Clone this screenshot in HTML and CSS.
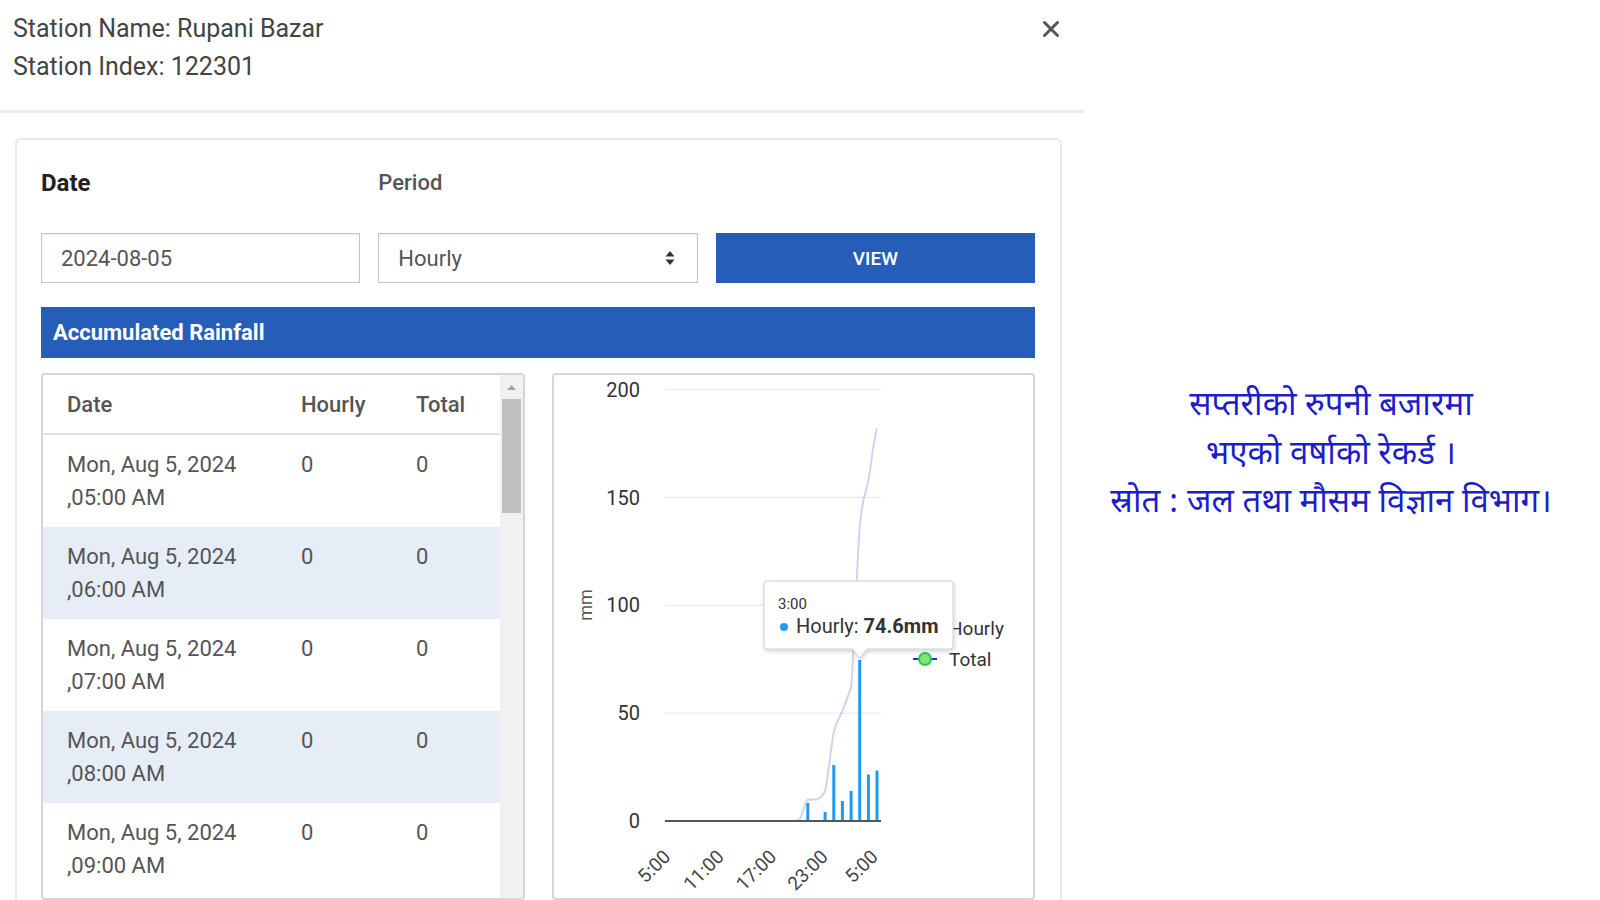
FILE: index.html
```html
<!DOCTYPE html>
<html lang="en">
<head>
<meta charset="utf-8">
<title>Rupani Bazar – Accumulated Rainfall</title>
<link rel="stylesheet" href="styles.css">
</head>
<body>
<div class="page">
  <section class="modal">
    <header class="modal-header">
      <div class="station">
        <div class="station-line">Station Name: Rupani Bazar</div>
        <div class="station-line">Station Index: 122301</div>
      </div>
      <button class="close" aria-label="Close">
        <svg viewBox="0 0 18 18" width="18" height="18"><path d="M2.5 2.5 L15.5 15.5 M15.5 2.5 L2.5 15.5" stroke="#555" stroke-width="3" stroke-linecap="round"/></svg>
      </button>
    </header>
    <div class="modal-body">
      <div class="card">
        <div class="form-grid">
          <div class="lbl lbl-date">Date</div>
          <div class="lbl lbl-period">Period</div>
          <div></div>
          <div class="input">2024-08-05</div>
          <div class="input select">
            <span>Hourly</span>
            <svg class="sel-arrows" viewBox="0 0 10 16" width="10" height="16"><path d="M5 1 L9.5 6.5 H0.5 Z M5 15 L9.5 9.5 H0.5 Z" fill="#333"/></svg>
          </div>
          <button class="btn">VIEW</button>
        </div>
        <div class="section-bar">Accumulated Rainfall</div>
        <div class="panels">
          <div class="panel table-panel">
            <div class="table">
              <div class="tr th">
                <div class="c1">Date</div><div>Hourly</div><div>Total</div>
              </div>
              <div class="tr td">
                <div class="c1">Mon, Aug 5, 2024<br>,05:00 AM</div><div>0</div><div>0</div>
              </div>
              <div class="tr td alt">
                <div class="c1">Mon, Aug 5, 2024<br>,06:00 AM</div><div>0</div><div>0</div>
              </div>
              <div class="tr td">
                <div class="c1">Mon, Aug 5, 2024<br>,07:00 AM</div><div>0</div><div>0</div>
              </div>
              <div class="tr td alt">
                <div class="c1">Mon, Aug 5, 2024<br>,08:00 AM</div><div>0</div><div>0</div>
              </div>
              <div class="tr td">
                <div class="c1">Mon, Aug 5, 2024<br>,09:00 AM</div><div>0</div><div>0</div>
              </div>
            </div>
            <div class="scrollbar">
              <div class="sb-arrow"><svg viewBox="0 0 9 5" width="9" height="5"><path d="M4.5 0 L9 5 H0 Z" fill="#a3a3a3"/></svg></div>
              <div class="sb-thumb"></div>
            </div>
          </div>
          <div class="panel chart-panel">
            <svg class="chart" viewBox="553 375 479 523" width="479" height="523">
              <defs>
                <filter id="tipShadow" x="-10%" y="-10%" width="130%" height="140%">
                  <feDropShadow dx="1" dy="2" stdDeviation="2" flood-color="#000" flood-opacity="0.18"/>
                </filter>
              </defs>
              <!-- grid -->
              <g stroke="#e6e6e6" stroke-width="1">
                <line x1="664" y1="389.6" x2="880" y2="389.6"/>
                <line x1="664" y1="497.5" x2="880" y2="497.5"/>
                <line x1="664" y1="605.3" x2="880" y2="605.3"/>
                <line x1="664" y1="713.2" x2="880" y2="713.2"/>
              </g>
              <!-- y labels -->
              <g class="ylab" text-anchor="end">
                <text x="639" y="396.6">200</text>
                <text x="639" y="504.5">150</text>
                <text x="639" y="612.3">100</text>
                <text x="639" y="720.2">50</text>
                <text x="639" y="828">0</text>
              </g>
              <text class="ytitle" x="585" y="605" text-anchor="middle" transform="rotate(-90 585 605)" dy="6">mm</text>
              <!-- x labels -->
              <g class="xlab" text-anchor="end">
                <text x="670.5" y="858" transform="rotate(-45 670.5 858)">5:00</text>
                <text x="724" y="858" transform="rotate(-45 724 858)">11:00</text>
                <text x="776.5" y="858" transform="rotate(-45 776.5 858)">17:00</text>
                <text x="828" y="858" transform="rotate(-45 828 858)">23:00</text>
                <text x="878" y="858" transform="rotate(-45 878 858)">5:00</text>
              </g>
              <!-- total (inactive) -->
              <path transform="matrix(1 0 0 0.994 0 0)" d="M664,826 L789.5,826 C792.4,825.8 795.3,826 798.2,824.9 C801.1,821.3 803.9,807.7 806.8,804.3 C809.7,804.3 812.6,804.3 815.5,804.3 C818.4,802.9 821.2,803 824.1,795.6 C827,784.4 829.9,750.4 832.8,737 C835.7,723.6 838.5,722.9 841.4,715.3 C844.3,707.7 847.2,700 850.1,691.5 C853,660.8 855.8,565.6 858.7,530.9 C861.6,496.2 864.5,499.7 867.4,483.1 C870.3,466.5 873.1,439.8 876,431.1" fill="none" stroke="#1f1fb0" stroke-opacity="0.2" stroke-width="2"/>
              <!-- bars -->
              <g fill="#1e9bf0">
                <rect x="796.7" y="820" width="3" height="1"/>
                <rect x="805.3" y="803" width="3" height="18"/>
                <rect x="822.6" y="812" width="3" height="9"/>
                <rect x="831.3" y="765" width="3" height="56"/>
                <rect x="839.9" y="801" width="3" height="20"/>
                <rect x="848.6" y="791" width="3" height="30"/>
                <rect x="857.2" y="660" width="3" height="161"/>
                <rect x="865.9" y="774.5" width="3" height="46.5"/>
                <rect x="874.5" y="770.5" width="3" height="50.5"/>
              </g>
              <line x1="664" y1="821" x2="880" y2="821" stroke="#555" stroke-width="2"/>
              <!-- legend -->
              <rect x="918" y="622" width="12" height="12" rx="2" fill="#1e9bf0"/>
              <text class="leg" x="948" y="635">Hourly</text>
              <line x1="912" y1="659" x2="936" y2="659" stroke="#2b2bd4" stroke-width="2"/>
              <circle cx="924" cy="659" r="6" fill="#86e07f" stroke="#2ecc40" stroke-width="2"/>
              <text class="leg" x="948" y="666">Total</text>
              <!-- tooltip -->
              <path d="M766,581 H949 Q952,581 952,584 V646 Q952,649 949,649 H866 L858.7,658 L851.4,649 H766 Q763,649 763,646 V584 Q763,581 766,581 Z" fill="#fff" stroke="#d0d0d0" stroke-width="1" filter="url(#tipShadow)"/>
              <text class="tip-head" x="777" y="609">3:00</text>
              <circle cx="783" cy="627" r="4" fill="#1e9bf0"/>
              <text class="tip-body" x="795" y="633">Hourly: <tspan font-weight="700">74.6mm</tspan></text>
            </svg>
          </div>
        </div>
      </div>
    </div>
  </section>
  <aside class="note">
    <p>सप्तरीको रुपनी बजारमा</p>
    <p>भएको वर्षाको रेकर्ड ।</p>
    <p>स्रोत : जल तथा मौसम विज्ञान विभाग।</p>
  </aside>
</div>
</body>
</html>
```

FILE: styles.css
```css
html, body {
  margin: 0;
  padding: 0;
}
body {
  width: 1600px;
  height: 900px;
  overflow: hidden;
  background: #fff;
  font-family: Roboto, "Liberation Sans", Arial, sans-serif;
  color: #444;
}
.page {
  display: flex;
  height: 900px;
}
.modal {
  width: 1084px;
  flex: none;
}
.modal-header {
  display: flex;
  justify-content: space-between;
  align-items: flex-start;
  padding: 10px 24px 24px 13px;
  border-bottom: 3px solid #ececec;
}
.station-line {
  font-size: 25px;
  line-height: 38px;
  color: #444;
}
.close {
  border: 0;
  background: none;
  padding: 0;
  margin-top: 10px;
  width: 18px;
  height: 18px;
  display: block;
}
.close svg { display: block; }
.modal-body {
  padding: 25px 22px 0 15px;
}
.card {
  border: 2px solid #e9e9e9;
  border-bottom: 0;
  border-radius: 6px 6px 0 0;
  padding: 28px 25px 0 24px;
}
.form-grid {
  display: grid;
  grid-template-columns: repeat(3, 1fr);
  column-gap: 18px;
  row-gap: 35px;
}
.lbl {
  height: 30px;
  line-height: 30px;
}
.lbl-date {
  font-size: 24px;
  font-weight: 700;
  color: #222;
}
.lbl-period {
  font-size: 22px;
  font-weight: 500;
  color: #555;
}
.input {
  height: 50px;
  box-sizing: border-box;
  border: 1px solid #c4c4c4;
  box-shadow: inset 0 1px 2px rgba(0,0,0,0.08);
  padding: 0 19px;
  display: flex;
  align-items: center;
  font-size: 22px;
  color: #555;
}
.select {
  justify-content: space-between;
  padding-right: 22px;
}
.sel-arrows { display: block; }
.btn {
  height: 50px;
  border: 0;
  background: #255db8;
  color: #fff;
  font-family: Roboto, "Liberation Sans", Arial, sans-serif;
  font-size: 19px;
  font-weight: 500;
  padding: 0;
}
.section-bar {
  margin-top: 24px;
  height: 51px;
  line-height: 51px;
  background: #255db8;
  color: #fff;
  font-size: 22px;
  font-weight: 700;
  padding-left: 12px;
}
.panels {
  margin-top: 15px;
  display: grid;
  grid-template-columns: 1fr 1fr;
  column-gap: 27px;
}
.panel {
  height: 527px;
  box-sizing: border-box;
  border: 2px solid #d6d6d6;
  border-radius: 4px;
  overflow: hidden;
}
.table-panel {
  display: flex;
}
.table {
  flex: 1;
  font-size: 22px;
  color: #555;
}
.tr {
  display: grid;
  grid-template-columns: 258px 115px 1fr;
}
.c1 { padding-left: 24px; }
.th {
  height: 60px;
  box-sizing: border-box;
  align-items: center;
  border-bottom: 2px solid #e3e3e3;
  font-weight: 500;
  color: #555;
}
.td {
  height: 92px;
  box-sizing: border-box;
  padding-top: 13px;
  line-height: 33px;
}
.td.alt {
  background: #e7edf7;
}
.scrollbar {
  width: 23px;
  flex: none;
  background: #f1f1f1;
}
.sb-arrow {
  height: 24px;
  display: flex;
  align-items: center;
  justify-content: center;
}
.sb-arrow svg { display: block; }
.sb-thumb {
  margin: 0 2px;
  height: 114px;
  background: #c1c1c1;
}
.chart {
  display: block;
}
.ylab text {
  font-family: Roboto, "Liberation Sans", Arial, sans-serif;
  font-size: 20px;
  fill: #333;
}
.ytitle {
  font-family: Roboto, "Liberation Sans", Arial, sans-serif;
  font-size: 18px;
  fill: #555;
}
.xlab text {
  font-family: Roboto, "Liberation Sans", Arial, sans-serif;
  font-size: 19px;
  fill: #444;
}
.leg {
  font-family: Roboto, "Liberation Sans", Arial, sans-serif;
  font-size: 19px;
  fill: #333;
}
.tip-head {
  font-family: Roboto, "Liberation Sans", Arial, sans-serif;
  font-size: 15px;
  fill: #333;
}
.tip-body {
  font-family: Roboto, "Liberation Sans", Arial, sans-serif;
  font-size: 20px;
  fill: #333;
}
.note {
  flex: 1;
  padding: 383px 22px 0 0;
  text-align: center;
  font-family: "Noto Sans Devanagari", "Lohit Devanagari", "Mukta", "Noto Sans", sans-serif;
  font-size: 33px;
  color: #1e1ec8;
}
.note p {
  margin: 0;
  line-height: 48.5px;
  white-space: nowrap;
}
```
